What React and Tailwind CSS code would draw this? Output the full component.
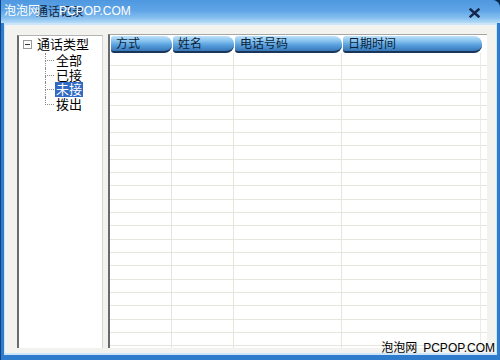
import React from 'react';

const columns = [
  { name: '方式', width: 'w-[61px]' },
  { name: '姓名', width: 'w-[61px]' },
  { name: '电话号码', width: 'w-[107px]' },
  { name: '日期时间', width: 'w-[139px]' },
];

const children = [
  { name: '全部', selected: false },
  { name: '已接', selected: false },
  { name: '未接', selected: true },
  { name: '拨出', selected: false },
];

const rows = Array.from({ length: 23 }, (_, i) => i);

const font = "font-['Liberation_Sans','Noto_Sans_CJK_SC',sans-serif]";

function TreeNode({ item, last }) {
  return (
    <div className="flex h-[14.7px]">
      <div className="w-[9px] flex flex-col">
        <div className="flex-1 border-l border-b border-dotted border-[#8a8a8a]" />
        <div className={last ? 'flex-1' : 'flex-1 border-l border-dotted border-[#8a8a8a]'} />
      </div>
      <span
        className={
          item.selected
            ? 'ml-[1px] px-[1px] bg-[#316ac5] text-white leading-[15px]'
            : 'ml-[1px] px-[1px] text-black leading-[15px]'
        }
      >
        {item.name}
      </span>
    </div>
  );
}

export default function App() {
  return (
    <div className={`w-[500px] h-[360px] bg-[#0b2a4a] ${font}`}>
      <div className="w-full h-full flex flex-col bg-[#2f7ccc] border-l border-[#0c4388] rounded-tr-[8px] overflow-hidden relative">
        {/* Title bar */}
        <div className="h-[23px] shrink-0 flex items-center justify-between bg-[linear-gradient(to_bottom,#4f98e0_0%,#5ea4e6_45%,#86bfef_78%,#b6dcf7_100%)] pl-[35px] pr-[20px]">
          <span className="text-[12px] text-[#14263c]">通话记录</span>
          <svg width="11" height="10" viewBox="0 0 11 10" className="mt-[3px]">
            <path d="M1.5 1.5 L9.5 8.5 M9.5 1.5 L1.5 8.5" stroke="#15264d" strokeWidth="2.4" strokeLinecap="square" />
          </svg>
        </div>

        {/* Body */}
        <div className="flex-1 min-h-0 flex mx-[3px] mb-[5px] bg-[#f2f2ee] border-t-2 border-l border-r border-b-2 border-[#cde5fa] pt-[9px] pl-[12px] pr-[9px] pb-[5px] gap-[5px]">
          {/* Tree panel */}
          <div className="w-[86px] mt-[1px] flex flex-col bg-white border-l-2 border-l-[#6c6c6c] border-t border-t-[#b4b4b4] border-r border-r-[#d6d6d6] text-[13px] pt-[1px]">
            <div className="flex items-center h-[15px]">
              <div className="ml-[4px] w-[9px] h-[9px] border border-[#9a9a9a] flex items-center justify-center">
                <div className="w-[5px] h-[1px] bg-[#333]" />
              </div>
              <span className="ml-[5px] leading-[15px] text-black">通话类型</span>
            </div>
            <div className="ml-[26px] mt-[1px] flex flex-col">
              {children.map((item, i) => (
                <TreeNode key={item.name} item={item} last={i === children.length - 1} />
              ))}
            </div>
          </div>

          {/* List panel */}
          <div className="flex-1 min-h-0 flex flex-col bg-white border-l-2 border-l-[#6a6a6a] border-t border-t-[#a6a6a6] overflow-hidden">
            <div className="flex h-[17px] mt-[1px] ml-[1px] gap-[1px] shrink-0">
              {columns.map((c) => (
                <div
                  key={c.name}
                  className={`${c.width} h-[17px] flex items-center pl-[5px] text-[12px] text-[#0b1f38] rounded-l-[3px] rounded-r-[8px] border-b-2 border-[#1a3557] bg-[linear-gradient(to_bottom,#bfe1f8_0%,#8cc6f0_30%,#58a0de_60%,#3777b8_100%)]`}
                >
                  {c.name}
                </div>
              ))}
            </div>
            <div className="flex-1 min-h-0 overflow-hidden flex flex-col">
              {rows.map((r) => (
                <div key={r} className="flex h-[13.33px] border-b border-[#e6e6dc] shrink-0">
                  <div className="w-[62px] border-r border-[#e6e6dc]" />
                  <div className="w-[62px] border-r border-[#e6e6dc]" />
                  <div className="w-[108px] border-r border-[#e6e6dc]" />
                  <div className="w-[139px] border-r border-[#ececE4]" />
                </div>
              ))}
            </div>
          </div>
        </div>

        {/* Watermarks */}
        <div className="absolute left-[3px] top-[3px] text-[12px] leading-[16px] text-white">
          泡泡网<span className="ml-[19px]">PCPOP.COM</span>
        </div>
        <div className="absolute right-[5px] bottom-[5px] text-[12px] leading-[14px] text-black">
          泡泡网<span className="ml-[6px]">PCPOP.COM</span>
        </div>
      </div>
    </div>
  );
}
